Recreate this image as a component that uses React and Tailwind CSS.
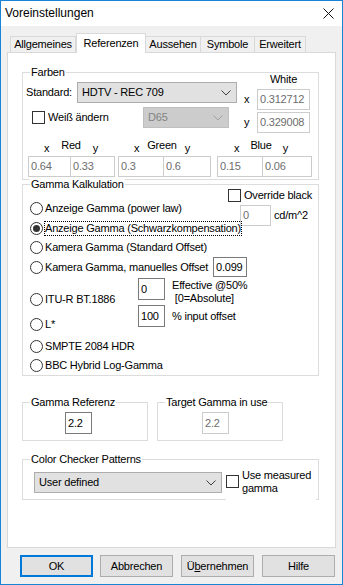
import React from "react";

function Chevron({ color }) {
  return (
    <svg width="10" height="6" viewBox="0 0 10 6" fill="none">
      <path d="M0.5 0.5 L5 5 L9.5 0.5" stroke={color} strokeWidth="1" />
    </svg>
  );
}

function Select({ value, disabled, className }) {
  return (
    <div
      className={`flex items-center justify-between border pl-[4px] pr-[5px] ${
        disabled
          ? "border-[#bfbfbf] bg-[#cccccc] text-[#838383]"
          : "border-[#adadad] bg-[#e1e1e1] text-black"
      } ${className}`}
    >
      <span>{value}</span>
      <Chevron color={disabled ? "#a3a3a3" : "#404040"} />
    </div>
  );
}

function TextBox({ value, disabled, className }) {
  return (
    <div
      className={`flex items-center border bg-white pl-[2px] ${
        disabled ? "border-[#cccccc] text-[#6d6d6d]" : "border-[#7a7a7a] text-black"
      } ${className}`}
    >
      {value}
    </div>
  );
}

function Checkbox() {
  return <span className="block h-[13px] w-[13px] shrink-0 border border-[#333333] bg-white" />;
}

function Radio({ label, checked, focused }) {
  return (
    <div className="flex items-center whitespace-nowrap">
      <span className="flex h-[13px] w-[13px] shrink-0 items-center justify-center rounded-full border border-[#333333] bg-white">
        {checked && <span className="h-[7px] w-[7px] rounded-full bg-[#333333]" />}
      </span>
      <span className={`ml-[2px] ${focused ? "outline-1 outline-dotted outline-black" : ""}`}>{label}</span>
    </div>
  );
}

function GroupBox({ title, className, children }) {
  return (
    <div className={`relative border border-[#dcdcdc] ${className}`}>
      <span className="absolute -top-[7px] left-[7px] bg-white px-[1px] leading-[13px] whitespace-nowrap">
        {title}
      </span>
      {children}
    </div>
  );
}

function Pair({ name, w1, w2, pl, pr, a, b, className = "" }) {
  return (
    <div className={`flex flex-col ${className}`}>
      <div className="flex h-[16px] items-start" style={{ paddingLeft: pl, paddingRight: pr }}>
        <span className="mt-[3px]">x</span>
        <span className="flex-1 text-center">{name}</span>
        <span className="mt-[3px]">y</span>
      </div>
      <div className="mt-[1px] flex">
        <div style={{ width: w1 }}>
          <TextBox disabled value={a} className="h-[21px] w-full" />
        </div>
        <div style={{ width: w2 }} className="-ml-px">
          <TextBox disabled value={b} className="h-[21px] w-full" />
        </div>
      </div>
    </div>
  );
}

const tabs = [
  { name: "Allgemeines", w: "w-[66px]" },
  { name: "Referenzen", w: "w-[70px]", active: true },
  { name: "Aussehen", w: "w-[56px] -ml-px" },
  { name: "Symbole", w: "w-[55px] -ml-px" },
  { name: "Erweitert", w: "w-[52px] -ml-px" },
];

export default function App() {
  return (
    <div className="flex h-[585px] w-[343px] flex-col border border-[#1883d7] bg-[#f0f0f0] font-['Liberation_Sans',Arial,sans-serif] text-[11px] leading-[13px] tracking-[-0.2px] text-black">
      {/* Titelleiste */}
      <div className="flex h-[25px] items-center bg-white pl-[4px] text-[12px] tracking-normal">
        <span>Voreinstellungen</span>
        <svg className="ml-auto mr-[8px]" width="11" height="11" viewBox="0 0 11 11">
          <path d="M0.5 0.5 L10.5 10.5 M10.5 0.5 L0.5 10.5" stroke="#111" strokeWidth="1" />
        </svg>
      </div>

      {/* Reiter */}
      <div className="flex h-[26px] items-end pl-[9px]">
        {tabs.map((t) =>
          t.active ? (
            <div
              key={t.name}
              className={`relative z-10 -mb-px flex h-[20px] justify-center border border-b-0 border-[#d9d9d9] bg-white pt-[3px] ${t.w}`}
            >
              {t.name}
            </div>
          ) : (
            <div
              key={t.name}
              className={`flex h-[16px] items-center justify-center border border-b-0 border-[#d9d9d9] bg-[#f0f0f0] ${t.w}`}
            >
              {t.name}
            </div>
          )
        )}
      </div>

      {/* Inhalt */}
      <div className="ml-[6px] flex h-[496px] w-[329px] flex-col border border-[#d9d9d9] bg-white pl-[14px] pt-[19px]">
        {/* Farben */}
        <GroupBox title="Farben" className="h-[108px] w-[297px]">
          <div className="flex h-[60px]">
            <div className="w-[214px] pl-[3px] pt-[9px]">
              <div className="flex h-[21px] items-center">
                <span className="w-[51px]">Standard:</span>
                <Select value="HDTV - REC 709" className="h-[21px] w-[160px]" />
              </div>
              <div className="mt-[4px] flex h-[21px] items-center">
                <span className="ml-[6px]">
                  <Checkbox />
                </span>
                <span className="ml-[3px] w-[95px]">Weiß ändern</span>
                <Select disabled value="D65" className="h-[21px] w-[86px]" />
              </div>
            </div>
            <div className="flex flex-col">
              <div className="pl-[20px] text-center">White</div>
              <div className="mt-[3px] flex items-center">
                <span className="w-[20px] pl-[7px]">x</span>
                <TextBox disabled value="0.312712" className="h-[21px] w-[53px]" />
              </div>
              <div className="mt-[2px] flex items-center">
                <span className="w-[20px] pl-[7px]">y</span>
                <TextBox disabled value="0.329008" className="h-[21px] w-[53px]" />
              </div>
            </div>
          </div>
          <div className="mt-[6px] flex pl-[5px]">
            <Pair name="Red" w1={43} w2={45} pl={16} pr={17} a="0.64" b="0.33" />
            <Pair name="Green" w1={46} w2={48} pl={16} pr={21} a="0.3" b="0.6" className="ml-[3px]" />
            <Pair name="Blue" w1={46} w2={50} pl={17} pr={24} a="0.15" b="0.06" className="ml-[6px]" />
          </div>
        </GroupBox>

        {/* Gamma Kalkulation */}
        <GroupBox title="Gamma Kalkulation" className="mt-[4px] h-[192px] w-[297px]">
          <div className="ml-[205px] mt-[3px] flex h-[14px] items-center whitespace-nowrap">
            <Checkbox />
            <span className="ml-[3px]">Override black</span>
          </div>
          <div className="-mt-[3px] flex h-[19px] items-start">
            <div className="flex h-[19px] w-[217px] items-center pl-[7px]">
              <Radio label="Anzeige Gamma (power law)" />
            </div>
            <TextBox disabled value="0" className="mt-[6px] h-[21px] w-[31px]" />
            <span className="ml-[3px] mt-[10px]">cd/m^2</span>
          </div>
          <div className="flex h-[20px] items-center pl-[7px]">
            <Radio label="Anzeige Gamma (Schwarzkompensation)" checked focused />
          </div>
          <div className="flex h-[19px] items-center pl-[7px]">
            <Radio label="Kamera Gamma (Standard Offset)" />
          </div>
          <div className="flex h-[20px] items-center">
            <div className="w-[190px] pl-[7px]">
              <Radio label="Kamera Gamma, manuelles Offset" />
            </div>
            <TextBox value="0.099" className="h-[20px] w-[34px]" />
          </div>
          <div className="flex h-[57px]">
            <div className="w-[115px] pl-[7px]">
              <div className="mt-[13px] flex h-[19px] items-center">
                <Radio label="ITU-R BT.1886" />
              </div>
              <div className="mt-[6px] flex h-[19px] items-center">
                <Radio label="L*" />
              </div>
            </div>
            <div className="flex flex-col">
              <TextBox value="0" className="mt-[1px] h-[22px] w-[27px]" />
              <TextBox value="100" className="mt-[5px] h-[22px] w-[27px]" />
            </div>
            <div className="ml-[7px] flex flex-col whitespace-nowrap">
              <span className="mt-[2px]">Effective @50%</span>
              <span>&nbsp;[0=Absolute]</span>
              <span className="mt-[5px]">% input offset</span>
            </div>
          </div>
          <div className="mt-[3px] flex h-[19px] items-center pl-[7px]">
            <Radio label="SMPTE 2084 HDR" />
          </div>
          <div className="flex h-[19px] items-center pl-[7px]">
            <Radio label="BBC Hybrid Log-Gamma" />
          </div>
        </GroupBox>

        {/* Gamma Referenz */}
        <div className="mt-[26px] flex">
          <GroupBox title="Gamma Referenz" className="h-[39px] w-[126px]">
            <TextBox value="2.2" className="ml-[42px] mt-[9px] h-[22px] w-[27px]" />
          </GroupBox>
          <GroupBox title="Target Gamma in use" className="ml-[9px] h-[39px] w-[126px]">
            <TextBox disabled value="2.2" className="ml-[44px] mt-[9px] h-[22px] w-[27px]" />
          </GroupBox>
        </div>

        {/* Color Checker */}
        <GroupBox title="Color Checker Patterns" className="mt-[18px] flex h-[41px] w-[297px] items-start">
          <Select value="User defined" className="ml-[11px] mt-[12px] h-[21px] w-[188px]" />
          <div className="ml-[4px] mt-[9px] flex h-[32px] w-[90px] items-start bg-white">
            <span className="mt-[6px]">
              <Checkbox />
            </span>
            <span className="ml-[3px]">
              Use measured
              <br />
              gamma
            </span>
          </div>
        </GroupBox>
      </div>

      {/* Schaltflächen */}
      <div className="mt-[7px] flex pl-[19px]">
        <button className="flex h-[22px] w-[73px] items-center justify-center border-2 border-[#0078d7] bg-[#e1e1e1]">
          OK
        </button>
        <button className="ml-[7px] flex h-[22px] w-[73px] items-center justify-center border border-[#adadad] bg-[#e1e1e1]">
          Abbrechen
        </button>
        <button className="ml-[8px] flex h-[22px] w-[73px] items-center justify-center border border-[#adadad] bg-[#e1e1e1]">
          Ü<span className="underline">b</span>ernehmen
        </button>
        <button className="ml-[8px] flex h-[22px] w-[73px] items-center justify-center border border-[#adadad] bg-[#e1e1e1]">
          Hilfe
        </button>
      </div>
    </div>
  );
}
